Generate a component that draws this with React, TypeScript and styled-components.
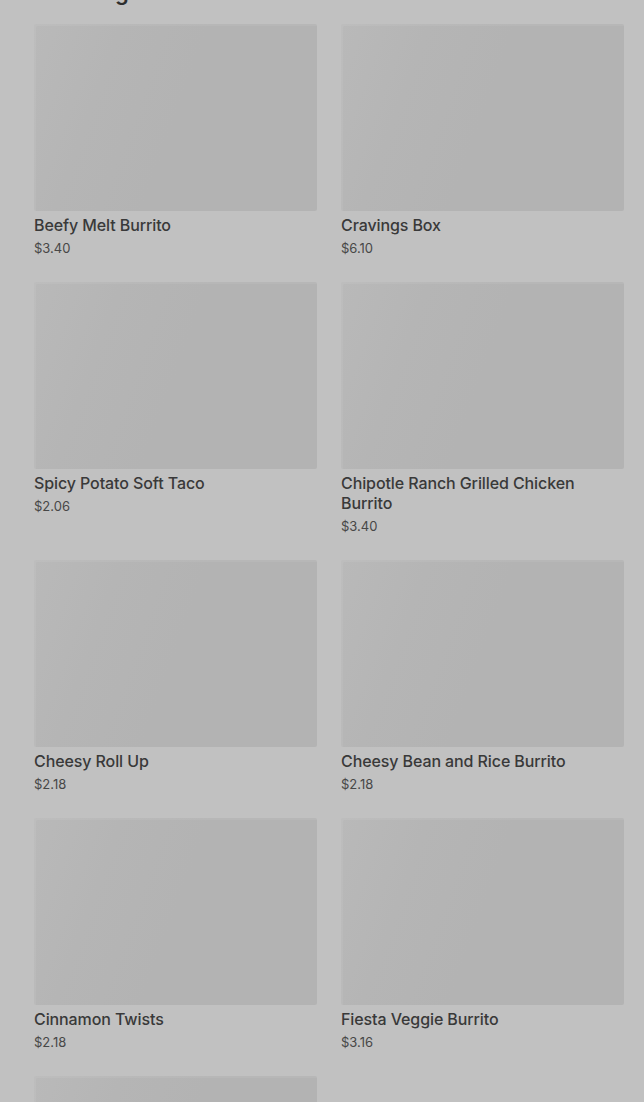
import React from 'react';
import styled, { createGlobalStyle } from 'styled-components';

const GlobalStyle = createGlobalStyle`
  html, body {
    margin: 0;
    padding: 0;
    background: #c1c1c1;
    font-family: Inter, "Noto Sans", sans-serif;
    overflow: hidden;
  }
`;

const items = [
  { name: 'Beefy Melt Burrito', price: '$3.40' },
  { name: 'Cravings Box', price: '$6.10' },
  { name: 'Spicy Potato Soft Taco', price: '$2.06' },
  { name: 'Chipotle Ranch Grilled Chicken Burrito', price: '$3.40' },
  { name: 'Cheesy Roll Up', price: '$2.18' },
  { name: 'Cheesy Bean and Rice Burrito', price: '$2.18' },
  { name: 'Cinnamon Twists', price: '$2.18' },
  { name: 'Fiesta Veggie Burrito', price: '$3.16' },
  { name: 'Nacho Fries', price: '$2.06' },
];

const App = () => {
  return (
    <Page>
      <GlobalStyle />
      <Heading>Trending at Taco Bell</Heading>
      <Grid>
        {items.map((item) => (
          <Card key={item.name}>
            <Thumb />
            <Name>{item.name}</Name>
            <Price>{item.price}</Price>
          </Card>
        ))}
      </Grid>
    </Page>
  );
};

export default App;

const Page = styled.div`
  padding: 0 20px 0 34px;
`;

const Heading = styled.h2`
  margin: -20px 0 20px;
  font-size: 22px;
  line-height: 24px;
  font-weight: 600;
  color: #2e2e2e;
`;

const Grid = styled.div`
  display: grid;
  grid-template-columns: repeat(2, 283px);
  column-gap: 24px;
  row-gap: 24px;
  align-items: start;
`;

const Card = styled.div`
  display: flex;
  flex-direction: column;
`;

const Thumb = styled.div`
  height: 187px;
  border-radius: 2px;
  background: linear-gradient(110deg, #b9b9b9 0%, #b5b5b5 25%, #b3b3b3 50%, #b3b3b3 100%);
  box-shadow: inset 2px 2px 0 rgba(255, 255, 255, 0.06);
`;

const Name = styled.div`
  margin-top: 4px;
  font-size: 16px;
  line-height: 20px;
  font-weight: 500;
  letter-spacing: -0.1px;
  color: #393939;
`;

const Price = styled.div`
  margin-top: 3px;
  font-size: 13px;
  line-height: 20px;
  color: #474747;
`;
